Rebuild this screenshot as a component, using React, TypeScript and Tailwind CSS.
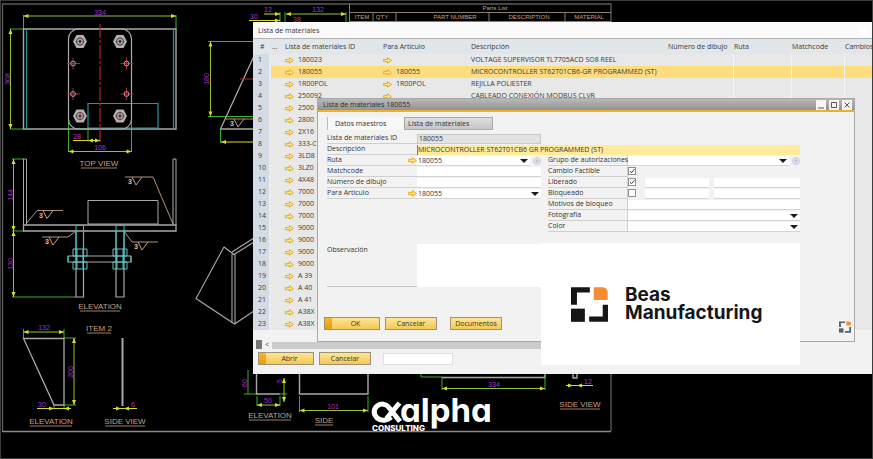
import { ReactNode } from 'react';
import clsx from 'clsx';

const GREEN = '#3fae2a';
const YELLOW = '#d6dc2e';
const WHITE = '#a9a9a9';
const TAN = '#c9a084';
const MAGENTA = '#b32fc4';
const CYAN = '#1f9aa0';
const RED = '#b3202e';

const materials = [
  { id: '180023', article: '', arrow: true, description: 'VOLTAGE SUPERVISOR TL7705ACD SO8 REEL' },
  { id: '180055', article: '180055', arrow: true, description: 'MICROCONTROLLER ST62T01CB6-GR PROGRAMMED (ST)' },
  { id: '1R00POL', article: '1R00POL', arrow: true, description: 'REJILLA POLIESTER' },
  { id: '250092', article: '', arrow: true, description: 'CABLEADO CONEXIÓN MODBUS CLVR' },
  { id: '2500' },
  { id: '2800' },
  { id: '2X16' },
  { id: '333-C' },
  { id: '3LD8' },
  { id: '3LZ0' },
  { id: '4X48' },
  { id: '7000' },
  { id: '7000' },
  { id: '7000' },
  { id: '9000' },
  { id: '9000' },
  { id: '9000' },
  { id: '9000' },
  { id: 'A 39' },
  { id: 'A 40' },
  { id: 'A 41' },
  { id: 'A38X' },
  { id: 'A38X' },
];

const LinkArrow = () => (
  <svg viewBox="0 0 16 12" className="h-[7px] w-[9px] shrink-0" aria-hidden="true">
    <path d="M1 4h7V1l7 5-7 5V8H1z" fill="#ffe37a" stroke="#e0a91c" strokeWidth="1.6" strokeLinejoin="round" />
  </svg>
);

const BeasMark = ({ className, dark = '#161616' }: { className: string; dark?: string }) => (
  <svg viewBox="0 0 112 105" className={className} aria-hidden="true">
    <path d="M0 0H57V16H18V53H0Z" fill={dark} />
    <path d="M69 0H97C106 2 110 6 111 14V39H69Z" fill="#f68b33" />
    <path d="M0 65H42V105H0Z" fill={dark} />
    <path d="M96 53H112V105H55V89H96Z" fill={dark} />
  </svg>
);

/* Dimension line with arrow heads */
const Dim = ({ x1, y1, x2, y2 }: { x1: number; y1: number; x2: number; y2: number }) => {
  const across = y1 === y2;
  return (
    <g fill={YELLOW}>
      <path d={`M${x1} ${y1}L${x2} ${y2}`} stroke="#93c42b" />
      {across ? (
        <path d={`M${x1} ${y1}l5 -2v4zM${x2} ${y2}l-5 -2v4z`} />
      ) : (
        <path d={`M${x1} ${y1}l-2 5h4zM${x2} ${y2}l-2 -5h4z`} />
      )}
    </g>
  );
};

const DimText = ({ x, y, up, children }: { x: number; y: number; up?: boolean; children: ReactNode }) => (
  <text
    x={x}
    y={y}
    fill={MAGENTA}
    fontSize="7"
    textAnchor="middle"
    transform={up ? `rotate(-90 ${x} ${y})` : undefined}
  >
    {children}
  </text>
);

const Caption = ({ x, y, half, children }: { x: number; y: number; half: number; children: ReactNode }) => (
  <g>
    <text x={x} y={y} fill={TAN} fontSize="8" textAnchor="middle">{children}</text>
    <path d={`M${x - half} ${y + 2}H${x + half}`} stroke={TAN} strokeWidth=".8" />
  </g>
);

const Nut = ({ x, y }: { x: number; y: number }) => (
  <g transform={`translate(${x} ${y})`}>
    <path d="M-7 0L-3.5 -6.5H3.5L7 0L3.5 6.5H-3.5Z" fill="#b4b4b4" />
    <circle r="3.6" fill="none" stroke="#3a3a3a" />
    <circle r="1.4" fill="#222" />
    <path d="M-5 0H5M0 -5V5" stroke={RED} strokeWidth=".5" />
  </g>
);

const Hole = ({ x, y }: { x: number; y: number }) => (
  <g transform={`translate(${x} ${y})`} fill="none">
    <path d="M-6 0H7M0 -6V6" stroke={RED} />
    <circle r="2.4" stroke={WHITE} />
  </g>
);

const Weld = ({ x, y, line }: { x: number; y: number; line: string }) => (
  <g fill="none" stroke={TAN}>
    <path d={line} strokeWidth=".9" />
    <path d={`M${x + 4} ${y}l4 8l6 -8`} />
    <text x={x} y={y + 7} fill="#e8bd94" stroke="none" fontSize="7" fontWeight="bold">3</text>
  </g>
);

const Drawing = () => (
  <svg
    viewBox="0 0 873 459"
    preserveAspectRatio="xMinYMin slice"
    className="absolute inset-0 h-full w-full font-[family-name:Liberation_Sans,sans-serif]"
    fill="none"
    role="img"
    aria-label="Bracket drawing"
  >
    {/* sheet frame */}
    <path d="M0 .5H873M0 458.5H873M872.5 0V459M.5 0V459" stroke="#3c3c3c" />
    <path d="M2.5 431V4H611V22M611 373V431" stroke="#5e5e5e" strokeWidth="1.3" />
    <path d="M2 431.5H611" stroke="#8b8b8b" strokeWidth="1.6" />

    {/* parts list */}
    <path d="M349.500 4V22M349 12.500H611M373 12.500V22M396 12.500V22M489 12.500V22M565 12.500V22M349 21.500H611" stroke="#8d7d72" />
    <g fill={TAN} fontSize="6" textAnchor="middle">
      <text x="495" y="10">Parts List</text>
      <text x="362" y="19">ITEM</text>
      <text x="382" y="19">QTY</text>
      <text x="455" y="19">PART NUMBER</text>
      <text x="529" y="19">DESCRIPTION</text>
      <text x="589" y="19">MATERIAL</text>
    </g>

    {/* top view */}
    <path d="M23.500 15V29M176 15V29M10 29H23M10 129H23M68.500 120V152M131.500 120V152M88 129V141" stroke={GREEN} />
    <path d="M23.500 29H176V129H23.500Z" stroke={WHITE} strokeWidth="1.4" />
    <path d="M26.500 29V129M173.500 29V129M88 103.500H158V128H88Z" stroke={CYAN} strokeWidth="1.2" />
    <rect x="68.500" y="29" width="63" height="100" rx="10" stroke={WHITE} strokeWidth="1.2" />
    <path d="M100 24V142" stroke={RED} strokeDasharray="14 2 3 2" strokeWidth="1.2" />
    <Nut x={80} y={41.5} />
    <Nut x={120} y={41.5} />
    <Nut x={80} y={116} />
    <Nut x={120} y={116} />
    <Hole x={73} y={63.5} />
    <Hole x={126.500} y={63.5} />
    <Hole x={73} y={94} />
    <Hole x={126.500} y={94} />
    <Dim x1={23.5} y1={16} x2={176} y2={16} />
    <Dim x1={10.5} y1={29} x2={10.5} y2={129} />
    <Dim x1={68.5} y1={151.5} x2={131.5} y2={151.5} />
    <path d="M73 140.500H100" stroke={YELLOW} />
    <path d="M88 140.500l5 -2v4zM100 140.500l-5 -2v4z" fill={YELLOW} />
    <DimText x={100} y={15}>334</DimText>
    <DimText x={10} y={79} up>308</DimText>
    <DimText x={77} y={139}>28</DimText>
    <DimText x={100} y={150}>106</DimText>
    <Caption x={99} y={166} half={18}>TOP VIEW</Caption>

    {/* front elevation */}
    <path d="M12 159H24M12 231H24M12 297H76" stroke={GREEN} />
    <g stroke={WHITE}>
      <path d="M23.500 225V159H26.500V225M173 225V159H176V225" />
      <path d="M23.500 225H176V231H23.500Z" strokeWidth="1.3" />
      <path d="M88 200.500H158V224H88Z" />
      <path d="M76 231V297H83.500V231M116 231V297H124V231M68 256H131V262H68Z" strokeWidth="1.2" />
    </g>
    <path d="M76 225V262M83.500 225V262M116 225V262M124 225V262M76 225.500H83M116 225.500H124M68 256V262M131 256V262" stroke="#20c8cc" />
    <path d="M73 249H87V256H73ZM113 249H127V256H113ZM73 262H87V269H73ZM113 262H127V269H113ZM77 249V269M83 249V269M117 249V269M123 249V269" stroke="#5cc6c9" />
    <Dim x1={13.5} y1={159} x2={13.5} y2={231} />
    <Dim x1={13.5} y1={231} x2={13.5} y2={297} />
    <DimText x={13} y={195} up>144</DimText>
    <DimText x={13} y={264} up>130</DimText>
    <Weld x={39} y={210.5} line="M26 224L37 210.500H63" />
    <Weld x={128} y={177} line="M173 224L153 177H125" />
    <Weld x={45} y={237} line="M76 231L68 237H42" />
    <Weld x={134} y={242} line="M124 231L132 242H158" />
    <Caption x={100} y={309} half={20}>ELEVATION</Caption>
    <Caption x={99} y={331} half={12}>ITEM 2</Caption>

    {/* gusset plate */}
    <path d="M23.500 329V338M64 329V338M64 338H76M64 405H76M54 405V409M64 405V409" stroke={GREEN} />
    <path d="M23.500 338.500H64V405H54Z" stroke={WHITE} strokeWidth="1.3" />
    <Dim x1={23.5} y1={332} x2={64} y2={332} />
    <Dim x1={74} y1={338} x2={74} y2={405} />
    <path d="M37 408.500H71M113 408.500H137" stroke={YELLOW} />
    <path d="M54 408.500l-5 -2v4zM64 408.500l5 -2v4zM121 408.500l-5 -2v4zM124 408.500l5 -2v4z" fill={YELLOW} />
    <DimText x={44} y={330}>132</DimText>
    <DimText x={73} y={372} up>200</DimText>
    <DimText x={42} y={407}>30</DimText>
    <DimText x={133} y={407}>6</DimText>
    <path d="M122.500 338V406" stroke={WHITE} strokeWidth="2" />
    <Caption x={51} y={424} half={21}>ELEVATION</Caption>
    <Caption x={125} y={424} half={20}>SIDE VIEW</Caption>

    {/* side gusset */}
    <path d="M208 41.500H253M208 116.500H253M220.500 130V143" stroke={GREEN} />
    <path d="M254 56L220.500 129H254" stroke={WHITE} strokeWidth="1.3" />
    <path d="M240 79H254" stroke={RED} />
    <Dim x1={210.5} y1={41.5} x2={210.5} y2={116.5} />
    <path d="M221 142H254" stroke={YELLOW} />
    <path d="M221 142l5 -2v4z" fill={YELLOW} />
    <DimText x={209} y={79} up>180</DimText>
    <Weld x={230} y={119} line="M226 119H254" />

    {/* isometric view */}
    <path d="M224 247L196 298.500L234.500 324L254 311M224 247L234 254.500L254 242M232 252L254 238M232 254V322M235 254V323" stroke={WHITE} strokeWidth="1.1" />

    {/* dimensions behind the list window */}
    <path d="M280 12V22M285 12V22M346 12V22" stroke={GREEN} />
    <path d="M264 14H280M249 20.500H280" stroke={YELLOW} />
    <path d="M280 14l-5 -2v4zM280 20.500l-5 -2v4z" fill={YELLOW} />
    <Dim x1={286} y1={14} x2={346} y2={14} />
    <DimText x={268} y={12}>12</DimText>
    <DimText x={254} y={19}>30</DimText>
    <DimText x={318} y={12}>132</DimText>
    <DimText x={297} y={22}>38</DimText>

    {/* lower details */}
    <path d="M248 370V394M244 394H258M257 396V406M280 396V406M280 394H287M299.500 396V412M368 396V412M421 373V377H442M442 377V390M545 377V390" stroke={GREEN} />
    <path d="M256.500 373V394H280M299.500 373V394H368V373M442 377.500H545M545 373V378M573 373V378H577V373" stroke={WHITE} strokeWidth="1.4" />
    <Dim x1={257} y1={405} x2={280} y2={405} />
    <Dim x1={299.5} y1={410.5} x2={368} y2={410.5} />
    <Dim x1={442} y1={388.5} x2={545} y2={388.5} />
    <Dim x1={284} y1={378} x2={284} y2={402} />
    <path d="M566 385.500H593" stroke={YELLOW} />
    <path d="M573 385.500l-5 -2v4zM577 385.500l5 -2v4z" fill={YELLOW} />
    <DimText x={247} y={383} up>60</DimText>
    <DimText x={282} y={381} up>5</DimText>
    <DimText x={268} y={403}>50</DimText>
    <DimText x={333} y={409}>101</DimText>
    <DimText x={494} y={387}>334</DimText>
    <DimText x={588} y={384}>12</DimText>
    <Caption x={270} y={418} half={21}>ELEVATION</Caption>
    <Caption x={324} y={423} half={9}>SIDE</Caption>
    <Caption x={580} y={407} half={20}>SIDE VIEW</Caption>
  </svg>
);

const Button = ({ primary, children }: { primary?: boolean; children: ReactNode }) => (
  <button
    type="button"
    className={clsx(
      'flex h-[13px] items-stretch border border-[#9d9276] bg-gradient-to-b from-[#fde596] to-[#f3c94f] leading-[11px] text-[#3c3526]',
      primary ? 'w-[56px]' : 'w-[52px]'
    )}
  >
    {primary && <span className="w-[7px] bg-gradient-to-b from-[#f7b52c] to-[#ee9a0c]" />}
    <span className="flex-1 text-center">{children}</span>
  </button>
);

const Caret = () => (
  <svg viewBox="0 0 8 4" className="pointer-events-none absolute right-[2px] top-[3px] h-[4px] w-[8px]" aria-hidden="true">
    <path d="M0 0H8L4 4Z" fill="#1b1b1b" />
  </svg>
);

const Info = () => (
  <svg viewBox="0 0 16 16" className="h-[8px] w-[8px] shrink-0" aria-hidden="true">
    <circle cx="8" cy="8" r="7" fill="#e4e6ef" stroke="#b9bfd2" strokeWidth="1.5" />
    <path d="M8 4V12M5 8H11" stroke="#aab2cb" strokeWidth="1.5" />
  </svg>
);

const field = 'h-[10px] min-w-0 border-b border-[#d4d4d4] bg-white px-px leading-[9px] outline-none';

type RowProps = { id: string; label: string; side?: boolean; arrow?: boolean; children: ReactNode };

const Row = ({ id, label, side, arrow, children }: RowProps) => (
  <div className="flex h-[11px] items-center">
    <label
      htmlFor={id}
      className={clsx(
        'flex h-[11px] shrink-0 items-center justify-between whitespace-nowrap border-b border-[#cfcfcf] leading-[10px]',
        side ? 'w-[80px] border-r' : 'w-[90px]'
      )}
    >
      {label}
      {arrow && <LinkArrow />}
    </label>
    {children}
  </div>
);

const Select = ({ id, value }: { id: string; value?: string }) => (
  <div className="relative flex min-w-0 flex-1">
    <select id={id} className={clsx(field, 'w-full appearance-none')}>
      <option>{value}</option>
    </select>
    <Caret />
  </div>
);

const Tick = ({ id, checked }: { id: string; checked?: boolean }) => (
  <span className="relative flex h-[9px] w-[9px] shrink-0">
    <input
      id={id}
      type="checkbox"
      defaultChecked={checked}
      className="peer h-[8px] w-[8px] appearance-none border border-[#8f8f8f] bg-white"
    />
    <svg viewBox="0 0 8 8" className="pointer-events-none absolute left-0 top-0 hidden h-[8px] w-[8px] peer-checked:block" aria-hidden="true">
      <path d="M2 4L3.500 5.800L6.500 2" fill="none" stroke="#444" />
    </svg>
  </span>
);

const ListWindow = () => (
  <section className="absolute left-[253px] right-px top-[22px] overflow-hidden bg-[#f2f2f2] text-[#3a3a3a]">
    <header className="flex h-[17px] items-center justify-between border-b border-[#b5b5b5] bg-[#fafafa] px-[5px] pt-[2px] text-[#333]">
      <h1>Lista de materiales</h1>
      <span className="h-[8px] w-[8px] bg-white" />
    </header>
    <div className="overflow-hidden bg-[#e8e8e8]">
      <table className="w-full min-w-[619px] table-fixed border-collapse whitespace-nowrap leading-[12px]">
        <colgroup>
          <col className="w-[17px]" />
          <col className="w-[13px]" />
          <col className="w-[99px]" />
          <col className="w-[88px]" />
          <col className="w-[197px]" />
          <col className="w-[66px]" />
          <col className="w-[58px]" />
          <col className="w-[53px]" />
          <col />
        </colgroup>
        <thead>
          <tr className="h-[15px] bg-[#e1e6eb] text-left">
            <th className="pl-[7px] font-normal">#</th>
            <th className="pl-[2px] font-normal">...</th>
            <th className="pl-[2px] font-normal">Lista de materiales ID</th>
            <th className="pl-px font-normal">Para Artículo</th>
            <th className="pl-px font-normal">Descripción</th>
            <th className="pl-px font-normal">Número de dibujo</th>
            <th className="pl-px font-normal">Ruta</th>
            <th className="pl-px font-normal">Matchcode</th>
            <th className="pl-px font-normal">Cambios</th>
          </tr>
        </thead>
        <tbody>
          {materials.map((item, i) => (
            <tr key={i} className={clsx('h-[12px]', i === 1 && 'bg-[#ffdc7c]')}>
              <td className="border-r-2 border-[#ececec] bg-[#d3dbe5] pl-[5px]">{i + 1}</td>
              <td />
              <td>
                <span className="flex items-center gap-[4px] pl-[2px]"><LinkArrow />{item.id}</span>
              </td>
              <td>
                {item.arrow && <span className="flex items-center gap-[4px] pl-px"><LinkArrow />{item.article}</span>}
              </td>
              <td className="pl-px">{item.description}</td>
              <td className="border-r border-[#f4f4f4]" />
              <td className="border-r border-[#f4f4f4]" />
              <td className="border-r border-[#f4f4f4]" />
              <td />
            </tr>
          ))}
        </tbody>
      </table>
    </div>
    <div className="flex h-[22px] items-end gap-[3px] bg-[#f2f2f2] pb-[3px] pl-[3px] pr-[73px]">
      <span className="h-[9px] w-[6px] bg-[#777]" />
      <span className="leading-[9px]">&lt;</span>
      <span className="h-[7px] flex-1 bg-[#cbcbcb]" />
    </div>
    <footer className="flex items-center gap-[5px] px-[5px] pb-[9px]">
      <Button primary>Abrir</Button>
      <Button>Cancelar</Button>
      <input aria-label="Buscar" className="ml-[7px] h-[12px] w-[70px] border border-[#dedede] bg-white outline-none" />
    </footer>
  </section>
);

const DetailWindow = () => (
  <section className="absolute left-[317px] right-[18px] top-[98px] border border-[#a9a9a9] bg-[#f2f2f2] text-[#333]">
    <header className="flex h-[13px] items-center justify-between border-b-2 border-[#eeb027] bg-gradient-to-b from-[#b9b9b9] to-[#929292] pl-[5px] pr-[2px]">
      <h2 className="leading-[11px] text-[#2e2e2e]">Lista de materiales 180055</h2>
      <div className="flex gap-[3px]">
        {['M2 8H8', 'M2.500 2.500H7.500V7.500H2.500Z', 'M2.500 2.500L7.500 7.500M7.500 2.500L2.500 7.500'].map((d, i) => (
          <button key={d} type="button" aria-label={['Minimizar', 'Maximizar', 'Cerrar'][i]} className="h-[10px] w-[10px] bg-[#f6f6f6]">
            <svg viewBox="0 0 10 10" fill="none" stroke="#555"><path d={d} /></svg>
          </button>
        ))}
      </div>
    </header>
    <nav className="flex gap-px pl-[9px] pt-[5px] leading-[11px]">
      <button type="button" className="h-[13px] w-[76px] border-l border-[#bbb] bg-[#f8f8f8] pl-[7px] text-left">Datos maestros</button>
      <button type="button" className="h-[13px] w-[89px] border border-[#a8a8a8] bg-gradient-to-b from-[#dedede] to-[#c6c6c6] pl-[3px] text-left">Lista de materiales</button>
    </nav>
    <form className="pl-[9px] pr-[54px] pt-[3px]">
      <Row id="listId" label="Lista de materiales ID">
        <input id="listId" readOnly defaultValue="180055" className="h-[10px] w-[124px] border border-[#c9c9c9] bg-[#e2e2e2] px-px leading-[8px] outline-none" />
      </Row>
      <Row id="description" label="Descripción">
        <input id="description" defaultValue="MICROCONTROLLER ST62T01CB6 GR PROGRAMMED (ST)" className="h-[10px] min-w-0 flex-1 border-l border-[#6c7fa6] bg-[#ffec9a] leading-[10px] outline-none" />
      </Row>
      <div className="flex items-start gap-[7px]">
        <div className="w-[214px] shrink-0">
          <Row id="route" label="Ruta" arrow>
            <Select id="route" value="180055" />
            <span className="ml-[3px] flex"><Info /></span>
          </Row>
          <Row id="matchcode" label="Matchcode">
            <input id="matchcode" className={clsx(field, 'flex-1')} />
          </Row>
          <Row id="drawing" label="Número de dibujo">
            <input id="drawing" className={clsx(field, 'flex-1')} />
          </Row>
          <Row id="article" label="Para Artículo" arrow>
            <Select id="article" value="180055" />
          </Row>
        </div>
        <div className="min-w-0 flex-1">
          <Row id="group" label="Grupo de autorizaciones" side>
            <Select id="group" />
            <span className="ml-[3px] flex"><Info /></span>
          </Row>
          <Row id="change" label="Cambio Factible" side>
            <Tick id="change" checked />
          </Row>
          <Row id="released" label="Liberado" side>
            <Tick id="released" checked />
            <input aria-label="Liberado por" className={clsx(field, 'ml-[8px] w-[64px]')} />
            <input aria-label="Liberado fecha" className={clsx(field, 'ml-[5px] flex-1')} />
          </Row>
          <Row id="blocked" label="Bloqueado" side>
            <Tick id="blocked" />
            <input aria-label="Bloqueado por" className={clsx(field, 'ml-[8px] w-[64px]')} />
            <input aria-label="Bloqueado fecha" className={clsx(field, 'ml-[5px] flex-1')} />
          </Row>
          <Row id="reasons" label="Motivos de bloqueo" side>
            <input id="reasons" className={clsx(field, 'flex-1')} />
          </Row>
          <Row id="photo" label="Fotografía" side>
            <Select id="photo" />
          </Row>
          <Row id="color" label="Color" side>
            <Select id="color" />
          </Row>
        </div>
      </div>
      <div className="flex pt-[12px]">
        <label htmlFor="remarks" className="w-[90px] shrink-0 border-b border-[#c6c6c6] leading-[11px]">Observación</label>
        <textarea id="remarks" className="h-[43px] min-w-0 flex-1 resize-none bg-white outline-none" />
      </div>
    </form>
    <footer className="flex items-end justify-between pb-[8px] pl-[6px] pr-[3px] pt-[30px]">
      <div className="flex gap-[5px] pb-[3px]">
        <Button primary>OK</Button>
        <Button>Cancelar</Button>
        <span className="w-[3px]" />
        <Button>Documentos</Button>
      </div>
      <BeasMark className="h-[12px] w-[12px]" dark="#56616b" />
    </footer>
  </section>
);

const App = () => {
  return (
    <main className="relative min-h-screen overflow-hidden bg-black font-[family-name:Open_Sans,Noto_Sans,sans-serif] text-[7px]">
      <Drawing />
      <ListWindow />
      <DetailWindow />

      {/* product card */}
      <div className="absolute left-[541px] right-[73px] top-[243px] flex items-center gap-[17px] bg-white py-[43px] pl-[30px]">
        <BeasMark className="h-[35px] w-[37px] shrink-0" />
        <p className="font-[family-name:Inter,sans-serif] text-[19px] font-bold leading-[18px] text-[#161616]">
          Beas<br />Manufacturing
        </p>
      </div>

      {/* partner logo */}
      <div className="absolute left-[371px] top-[390px] font-[family-name:Inter,sans-serif] text-white">
        <div className="flex items-start">
          <svg viewBox="0 0 32 24" className="mt-[10px] h-[24px] w-[32px]" fill="none" stroke="currentColor" strokeWidth="5" aria-hidden="true">
            <path d="M20 17C16.500 20.800 10 21.300 6.200 18C2.200 14.500 2.200 9 6.200 6C10 3 15 3.800 17.500 7L29 21.500" />
            <path d="M15.500 18.500L28.500 3" />
          </svg>
          <span className="-ml-[3px] text-[33px] font-bold leading-[40px] [font-feature-settings:'cv11']">alpha</span>
        </div>
        <p className="-mt-[6px] pl-px text-[8px] font-extrabold leading-[8px]">CONSULTING</p>
      </div>
    </main>
  );
};

export default App;
